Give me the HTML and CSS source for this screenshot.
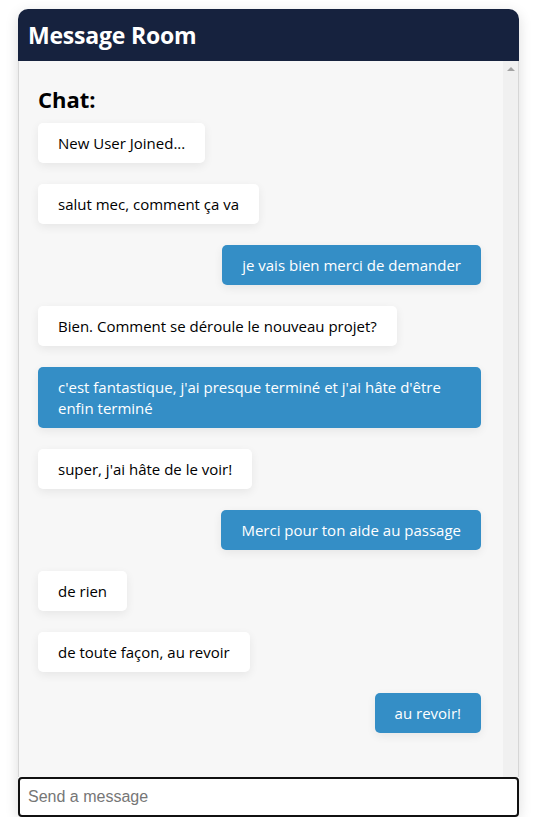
FILE: index.html
```html
<!DOCTYPE html>
<html lang="fr">
<head>
<meta charset="utf-8">
<title>Message Room</title>
<link rel="stylesheet" href="styles.css">
</head>
<body>
<div class="room">
  <header class="room-header">
    <h1 class="room-title">Message Room</h1>
  </header>
  <div class="chat-wrap">
    <section class="chat">
      <h2 class="chat-title">Chat:</h2>
      <div class="msg other">New User Joined...</div>
      <div class="msg other">salut mec, comment ça va</div>
      <div class="msg mine">je vais bien merci de demander</div>
      <div class="msg other">Bien. Comment se déroule le nouveau projet?</div>
      <div class="msg mine multi">c'est fantastique, j'ai presque terminé et j'ai hâte d'être enfin terminé</div>
      <div class="msg other">super, j'ai hâte de le voir!</div>
      <div class="msg mine">Merci pour ton aide au passage</div>
      <div class="msg other">de rien</div>
      <div class="msg other">de toute façon, au revoir</div>
      <div class="msg mine">au revoir!</div>
    </section>
    <div class="scroll-track" aria-hidden="true"><span class="scroll-up"></span></div>
  </div>
  <input class="composer" type="text" placeholder="Send a message" autofocus>
</div>
</body>
</html>
```
FILE: styles.css
```css
* { box-sizing: border-box; }
html, body { margin: 0; padding: 0; background: #ffffff; }
body {
  padding: 9px 16px 0 18px;
  font-family: "Open Sans", "Noto Sans", sans-serif;
}
.room {
  width: 501px;
  display: flex;
  flex-direction: column;
  border-radius: 10px;
  box-shadow: 0 4px 14px rgba(0,0,0,0.14);
}
.room-header {
  background: #16223e;
  border-radius: 10px 10px 0 0;
  height: 52px;
  padding: 0 10px;
  display: flex;
  align-items: center;
}
.room-title {
  margin: 0;
  color: #ffffff;
  font-family: "Open Sans", sans-serif;
  font-weight: 700;
  font-size: 23px;
  letter-spacing: -0.2px;
}
.chat-wrap {
  height: 716px;
  display: flex;
  background: #f7f7f7;
  border-left: 1px solid #d6d6d6;
  border-right: 1px solid #d6d6d6;
}
.chat {
  flex: 1;
  min-width: 0;
  overflow: hidden;
  padding: 20px 22px 0 19px;
  display: flex;
  flex-direction: column;
  align-items: flex-start;
}
.scroll-track {
  flex: none;
  width: 15px;
  background: #f0f0f0;
  display: flex;
  justify-content: center;
  padding-top: 6px;
}
.scroll-up {
  width: 0;
  height: 0;
  border-left: 4px solid transparent;
  border-right: 4px solid transparent;
  border-bottom: 4px solid #a3a3a3;
}
.chat-title {
  margin: 4px 0 10px 0;
  font-size: 22px;
  font-weight: 700;
  color: #000;
  line-height: 28px;
}
.msg {
  flex: none;
  padding: 10px 20px;
  font-size: 15px;
  line-height: 20px;
  border-radius: 5px;
  margin-bottom: 21px;
  max-width: 100%;
  box-shadow: 0 3px 10px rgba(0,0,0,0.07);
}
.msg.multi { line-height: 20.5px; }
.msg.other { background: #ffffff; color: #000; }
.msg.mine { background: #348ec6; color: #ffffff; align-self: flex-end; }
.composer {
  height: 40px;
  width: 501px;
  border: 2px solid #111111;
  border-radius: 4px;
  padding: 0 8px;
  font-family: "Liberation Sans", Arial, sans-serif;
  font-size: 16px;
  color: #000;
  background: #fff;
  outline: none;
}
.composer::placeholder { color: #767676; }
```
